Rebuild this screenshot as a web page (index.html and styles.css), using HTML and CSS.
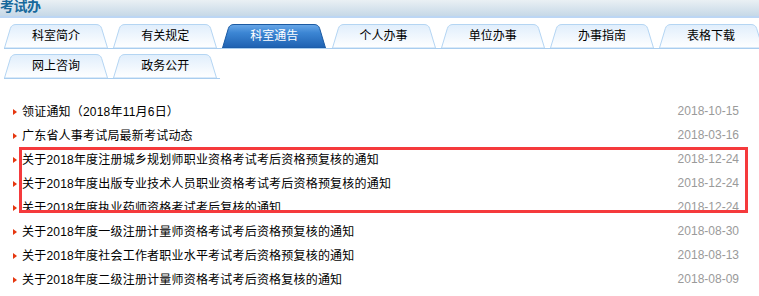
FILE: index.html
```html
<!DOCTYPE html>
<html lang="zh-CN">
<head>
<meta charset="utf-8">
<title>考试办</title>
<link rel="stylesheet" href="styles.css">
</head>
<body>
<div class="page">
  <div class="header"><span class="header-title">考试办</span></div>
  <div class="tabs">
    <div class="tab-row tab-row-full">
      <div class="tab">科室简介</div>
      <div class="tab">有关规定</div>
      <div class="tab tab-active">科室通告</div>
      <div class="tab">个人办事</div>
      <div class="tab">单位办事</div>
      <div class="tab">办事指南</div>
      <div class="tab">表格下载</div>
    </div>
    <div class="tab-row tab-row-short">
      <div class="tab">网上咨询</div>
      <div class="tab">政务公开</div>
    </div>
  </div>
  <ul class="news">
    <li class="news-item"><span class="bullet"></span><span class="news-title">领证通知（2018年11月6日）</span><span class="news-date">2018-10-15</span></li>
    <li class="news-item"><span class="bullet"></span><span class="news-title">广东省人事考试局最新考试动态</span><span class="news-date">2018-03-16</span></li>
    <li class="news-item"><span class="bullet"></span><span class="news-title">关于2018年度注册城乡规划师职业资格考试考后资格预复核的通知</span><span class="news-date">2018-12-24</span></li>
    <li class="news-item"><span class="bullet"></span><span class="news-title">关于2018年度出版专业技术人员职业资格考试考后资格预复核的通知</span><span class="news-date">2018-12-24</span></li>
    <li class="news-item"><span class="bullet"></span><span class="news-title">关于2018年度执业药师资格考试考后复核的通知</span><span class="news-date">2018-12-24</span></li>
    <li class="news-item"><span class="bullet"></span><span class="news-title">关于2018年度一级注册计量师资格考试考后资格预复核的通知</span><span class="news-date">2018-08-30</span></li>
    <li class="news-item"><span class="bullet"></span><span class="news-title">关于2018年度社会工作者职业水平考试考后资格预复核的通知</span><span class="news-date">2018-08-13</span></li>
    <li class="news-item"><span class="bullet"></span><span class="news-title">关于2018年度二级注册计量师资格考试考后资格复核的通知</span><span class="news-date">2018-08-09</span></li>
  </ul>
  <div class="highlight-box"></div>
</div>
</body>
</html>
```
FILE: styles.css
```css
html, body {
  margin: 0;
  padding: 0;
  background: #ffffff;
}
body {
  width: 759px;
  height: 296px;
  overflow: hidden;
  font-family: "Liberation Sans", "Noto Sans CJK SC", sans-serif;
}
.page {
  position: relative;
  width: 759px;
  height: 296px;
  overflow: hidden;
}
.header {
  height: 16px;
  background: linear-gradient(#eaf0f4, #c6d8e7);
  border-bottom: 2px solid #bcd6f4;
  overflow: hidden;
}
.header-title {
  display: block;
  margin-top: -3px;
  font-size: 14px;
  line-height: 18px;
  font-weight: bold;
  color: #17699c;
  letter-spacing: -0.5px;
}
.tabs {
  padding-top: 6px;
}
.tab-row {
  display: flex;
  gap: 5.2px;
  margin-left: 4px;
  border-bottom: 1.5px solid #a9cdef;
  overflow: hidden;
}
.tab-row-full {
  margin-bottom: 4.5px;
}
.tab-row-short {
  width: 216px;
}
.tab {
  flex: 0 0 104px;
  height: 24px;
  line-height: 24px;
  text-align: center;
  font-size: 12px;
  color: #000000;
  background: url("data:image/svg+xml,%3Csvg xmlns='http://www.w3.org/2000/svg' width='104' height='24'%3E%3Cdefs%3E%3ClinearGradient id='g' x1='0' y1='0' x2='0' y2='1'%3E%3Cstop offset='0' stop-color='%23e0eefc'/%3E%3Cstop offset='1' stop-color='%23ffffff'/%3E%3C/linearGradient%3E%3C/defs%3E%3Cpath d='M0.5 24 L6.3 4.6 Q7.5 0.5 12 0.5 L92 0.5 Q96.5 0.5 97.7 4.6 L103.5 24 Z' fill='url(%23g)' stroke='%23b4d5f3'/%3E%3C/svg%3E") no-repeat;
}
.tab-active {
  color: #ffffff;
  background: url("data:image/svg+xml,%3Csvg xmlns='http://www.w3.org/2000/svg' width='104' height='24'%3E%3Cdefs%3E%3ClinearGradient id='a' x1='0' y1='0' x2='0' y2='1'%3E%3Cstop offset='0' stop-color='%236aa8e8'/%3E%3Cstop offset='0.35' stop-color='%233c86d4'/%3E%3Cstop offset='1' stop-color='%231d60b0'/%3E%3C/linearGradient%3E%3C/defs%3E%3Cpath d='M0.5 24 L6.3 4.6 Q7.5 0.5 12 0.5 L92 0.5 Q96.5 0.5 97.7 4.6 L103.5 24 Z' fill='url(%23a)' stroke='%231b5aa2'/%3E%3C/svg%3E") no-repeat;
}
.news {
  list-style: none;
  margin: 20px 0 0 0;
  padding: 0;
}
.news-item {
  display: flex;
  align-items: center;
  height: 24px;
  padding: 0 20px 0 13px;
}
.bullet {
  flex: 0 0 auto;
  width: 0;
  height: 0;
  margin-top: 3px;
  margin-right: 5px;
  border-left: 4px solid #e5360f;
  border-top: 3.5px solid transparent;
  border-bottom: 3.5px solid transparent;
}
.news-title {
  flex: 1;
  font-size: 12px;
  letter-spacing: 0.2px;
  color: #000000;
  white-space: nowrap;
}
.news-date {
  flex: 0 0 auto;
  font-size: 12px;
  letter-spacing: 0;
  color: #9a9a9a;
}
.highlight-box {
  position: absolute;
  left: 19px;
  top: 147px;
  width: 729px;
  height: 66px;
  box-sizing: border-box;
  border: 3px solid #f53a3c;
}
```
